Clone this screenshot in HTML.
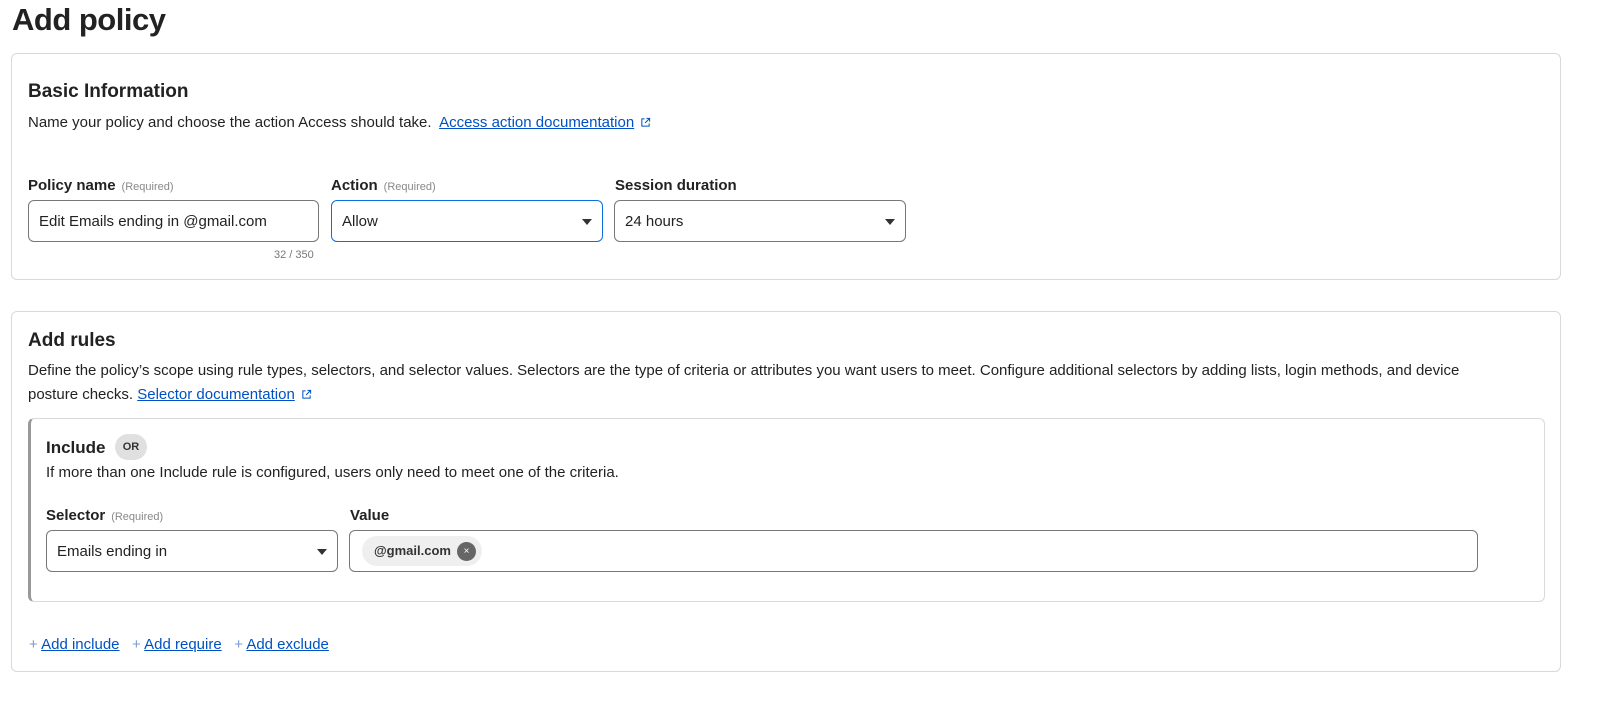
<!DOCTYPE html>
<html><head><style>
*{box-sizing:border-box;margin:0;padding:0}
body{width:1615px;height:705px;background:#fff;font-family:"Liberation Sans",sans-serif;color:#222;position:relative;overflow:hidden}
.abs{position:absolute}
h1{position:absolute;left:12px;top:2px;font-size:31px;font-weight:bold;color:#222;letter-spacing:-0.5px}
.card{position:absolute;border:1px solid #d9d9d9;border-radius:6px;background:#fff}
.h2{font-size:19px;font-weight:bold;color:#222}
.p{font-size:15px;color:#222}
a{color:#0051c3;text-decoration:underline}
.lbl{font-size:15px;font-weight:bold;color:#222}
.req{font-size:11px;color:#888;font-weight:normal;margin-left:6px}
.in{position:absolute;border:1px solid #777;border-radius:6px;height:42px;font-size:15px;padding:12px 10px;color:#222}
.arr{position:absolute;right:10px;top:18px;width:0;height:0;border-left:5px solid transparent;border-right:5px solid transparent;border-top:6px solid #333}
.ext{display:inline-block;width:11px;height:11px;margin-left:6px;vertical-align:-1px}
</style></head><body>
<h1>Add policy</h1>

<div class="card" style="left:11px;top:53px;width:1550px;height:227px"></div>
<div class="abs h2" style="left:28px;top:81px">Basic Information</div>
<div class="abs p" style="left:28px;top:114px">Name your policy and choose the action Access should take.&nbsp; <a>Access action documentation</a><svg class="ext" viewBox="0 0 12 12"><path d="M5 2H2v8h8V7M7 1.5h3.5V5M10.5 1.5L5.5 6.5" fill="none" stroke="#0051c3" stroke-width="1.1"/></svg></div>

<div class="abs lbl" style="left:28px;top:177px">Policy name<span class="req">(Required)</span></div>
<div class="in" style="left:28px;top:200px;width:291px">Edit Emails ending in @gmail.com</div>
<div class="abs" style="left:274px;top:249px;font-size:11px;color:#777">32 / 350</div>

<div class="abs lbl" style="left:331px;top:177px">Action<span class="req">(Required)</span></div>
<div class="in" style="left:331px;top:200px;width:272px;border-color:#0b6fdf">Allow<div class="arr"></div></div>

<div class="abs lbl" style="left:615px;top:177px">Session duration</div>
<div class="in" style="left:614px;top:200px;width:292px">24 hours<div class="arr"></div></div>

<div class="card" style="left:11px;top:311px;width:1550px;height:361px"></div>
<div class="abs h2" style="left:28px;top:330px">Add rules</div>
<div class="abs p" style="left:28px;top:359px;width:1480px;line-height:24px">Define the policy’s scope using rule types, selectors, and selector values. Selectors are the type of criteria or attributes you want users to meet. Configure additional selectors by adding lists, login methods, and device posture checks. <a>Selector documentation</a><svg class="ext" viewBox="0 0 12 12"><path d="M5 2H2v8h8V7M7 1.5h3.5V5M10.5 1.5L5.5 6.5" fill="none" stroke="#0051c3" stroke-width="1.1"/></svg></div>

<div class="card" style="left:28px;top:418px;width:1517px;height:184px;border-left:3px solid #999"></div>
<div class="abs" style="left:46px;top:438px;font-size:17px;font-weight:bold">Include</div>
<div class="abs" style="left:115px;top:434px;width:32px;height:26px;border-radius:13px;background:#e0e0e0;font-size:11px;font-weight:bold;text-align:center;line-height:26px;color:#333">OR</div>
<div class="abs p" style="left:46px;top:464px">If more than one Include rule is configured, users only need to meet one of the criteria.</div>

<div class="abs lbl" style="left:46px;top:507px">Selector<span class="req">(Required)</span></div>
<div class="in" style="left:46px;top:530px;width:292px">Emails ending in<div class="arr"></div></div>
<div class="abs lbl" style="left:350px;top:507px">Value</div>
<div class="in" style="left:349px;top:530px;width:1129px;padding:0"></div>
<div class="abs" style="left:362px;top:536px;width:120px;height:30px;border-radius:15px;background:#efefef;font-size:13px;font-weight:bold;line-height:30px;padding-left:12px;color:#333">@gmail.com</div>
<div class="abs" style="left:457px;top:542px;width:19px;height:19px;border-radius:50%;background:#666;color:#fff;font-size:10px;text-align:center;line-height:19px">×</div>

<div class="abs p" style="left:29px;top:636px;color:#0051c3"><span style="color:#7a9ad6">+</span> <a>Add include</a>&nbsp;&nbsp; <span style="color:#7a9ad6">+</span> <a>Add require</a>&nbsp;&nbsp; <span style="color:#7a9ad6">+</span> <a>Add exclude</a></div>
</body></html>
